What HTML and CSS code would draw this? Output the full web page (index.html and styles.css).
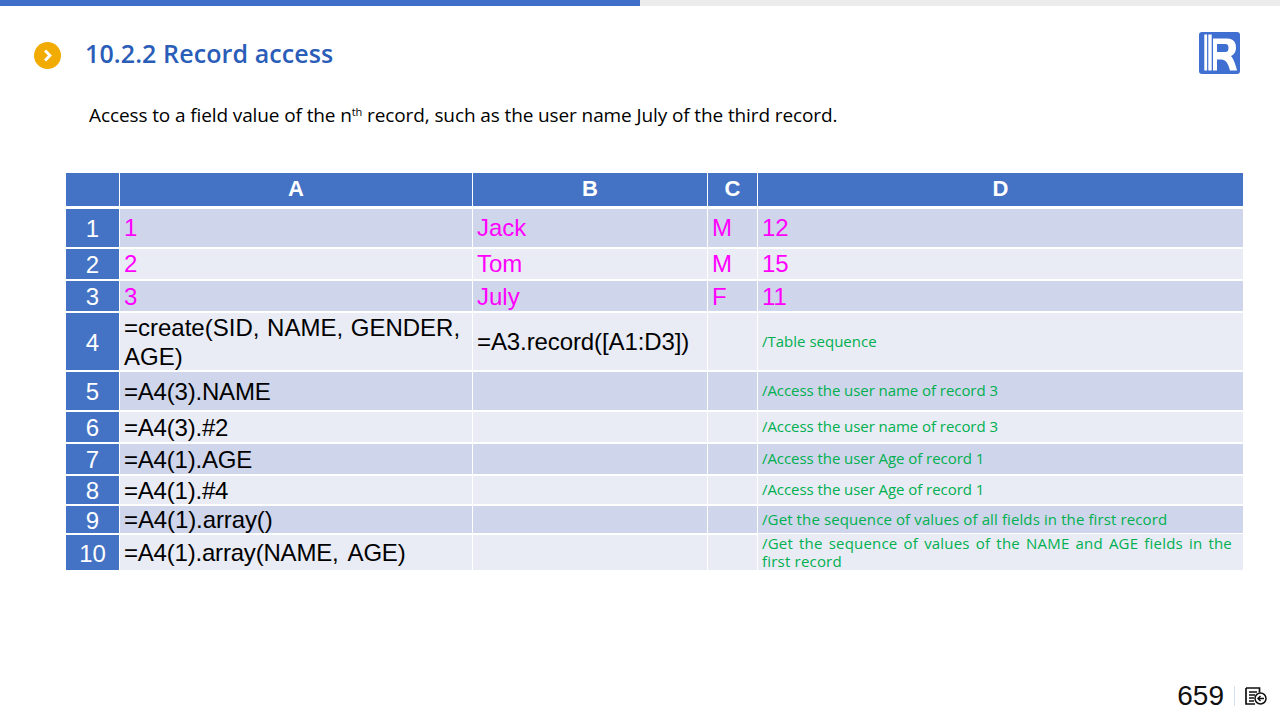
FILE: index.html
```html
<!DOCTYPE html>
<html lang="en">
<head>
<meta charset="utf-8">
<title>10.2.2 Record access</title>
<link rel="stylesheet" href="styles.css">
</head>
<body>
<div class="progress"><div class="progress-fill"></div></div>
<header class="title-row">
  <svg class="bullet" width="27" height="27" viewBox="0 0 28 28"><circle cx="14" cy="14" r="14" fill="#f2ab00"/><path d="M11.500 8.800 16.500 14 11.500 19.200" fill="none" stroke="#fff" stroke-width="3"/></svg>
  <h1 class="title">10.2.2 Record access</h1>
  <svg class="logo" width="41" height="42" viewBox="0 0 41 42"><rect width="41" height="42" rx="3" fill="#3f6fd0"/><path d="M5.300 2.500h2.800v36H5.300zM9.300 2.500h3.400v36H9.300z" fill="#fff"/><path fill-rule="evenodd" d="M14 6.500H28.500C34 6.500 37 10 37 15.500 37 20 35 22.500 32 24 34.500 27 36.500 32 38 38.500H31C29.500 32 27 27.500 22 27.500H18V38.500H14ZM18 12V20H26.500C28.500 20 29.500 18.500 29.500 16S28.500 12 26.500 12Z" fill="#fff"/></svg>
</header>
<p class="intro">Access to a field value of the n<sup class="ord">th</sup> record, such as the user name July of the third record.</p>
<div class="sheet">
  <div class="head"></div><div class="head">A</div><div class="head">B</div><div class="head">C</div><div class="head">D</div>

  <div class="num">1</div><div class="cell dark pink lift">1</div><div class="cell dark pink lift">Jack</div><div class="cell dark pink lift">M</div><div class="cell dark pink lift">12</div>
  <div class="num">2</div><div class="cell pink lift">2</div><div class="cell pink lift">Tom</div><div class="cell pink lift">M</div><div class="cell pink lift">15</div>
  <div class="num">3</div><div class="cell dark pink">3</div><div class="cell dark pink">July</div><div class="cell dark pink">F</div><div class="cell dark pink">11</div>
  <div class="num">4</div><div class="cell spaced">=create(SID, NAME, GENDER, AGE)</div><div class="cell tight">=A3.record([A1:D3])</div><div class="cell"></div><div class="cell note">/Table sequence</div>
  <div class="num">5</div><div class="cell dark formula">=A4(3).NAME</div><div class="cell dark"></div><div class="cell dark"></div><div class="cell dark note narrow">/Access the user name of record 3</div>
  <div class="num">6</div><div class="cell formula">=A4(3).#2</div><div class="cell"></div><div class="cell"></div><div class="cell note narrow">/Access the user name of record 3</div>
  <div class="num">7</div><div class="cell dark formula">=A4(1).AGE</div><div class="cell dark"></div><div class="cell dark"></div><div class="cell dark note narrow">/Access the user Age of record 1</div>
  <div class="num">8</div><div class="cell formula">=A4(1).#4</div><div class="cell"></div><div class="cell"></div><div class="cell note narrow">/Access the user Age of record 1</div>
  <div class="num">9</div><div class="cell dark tight">=A4(1).array()</div><div class="cell dark"></div><div class="cell dark"></div><div class="cell dark note wide">/Get the sequence of values of all fields in the first record</div>
  <div class="num">10</div><div class="cell args">=A4(1).array(NAME, AGE)</div><div class="cell"></div><div class="cell"></div><div class="cell note just">/Get the sequence of values of the NAME and AGE fields in the first record</div>
</div>
<footer class="foot">
  <span class="page">659</span>
  <span class="sep"></span>
  <svg class="back" width="22" height="18" viewBox="0 0 22 18"><path d="M1 1h13.500v4.500M1 1v16h9" fill="none" stroke="#111" stroke-width="1.700"/><path d="M4 5h8M4 8h6M4 11h5M4 14h5" stroke="#111" stroke-width="1.500"/><circle cx="15.500" cy="11.500" r="5.500" fill="#fff" stroke="#111" stroke-width="1.500"/><path d="M19 11.500h-6M15.500 9 13 11.500 15.500 14" fill="none" stroke="#111" stroke-width="1.500"/></svg>
</footer>
</body>
</html>
```
FILE: styles.css
```css
* { box-sizing: border-box; }
html, body { margin: 0; padding: 0; }
body { width: 1280px; height: 720px; background: #fff; overflow: hidden; position: relative; font-family: "Liberation Sans", Arial, sans-serif; }
.progress { height: 6px; background: #ececec; }
.progress-fill { width: 640px; height: 100%; background: #3f6fc8; }
.title-row { display: flex; align-items: center; height: 44px; margin-top: 26px; padding: 0 40px 0 34px; }
.bullet { flex: none; margin-top: 2px; }
.title { flex: 1; margin: -2px 0 0 24px; font: 600 25px/44px "Open Sans", sans-serif; letter-spacing: 0.1px; color: #2a5db8; }
.logo { flex: none; margin-top: -3px; }
.intro { margin: 26px 0 0 89px; font: 400 19px/26px "Open Sans", sans-serif; letter-spacing: -0.11px; color: #000; height: 26px; }
.ord { font-size: 11px; line-height: 0; vertical-align: 6px; }
.sheet { display: grid; width: 1177px; margin: 45px 0 0 66px; grid-template-columns: 53px 352px 234px 49px 485px; grid-template-rows: 34px 38px 30px 30px 57px 38px 30px 30px 28px 27px 35px; column-gap: 1px; row-gap: 2px; }
.head { height: 33px; padding-bottom: 2px; background: #4472c4; color: #fff; font-size: 22px; font-weight: 700; display: flex; align-items: center; justify-content: center; }
.num { padding-top: 2px; background: #4472c4; color: #fff; font-size: 24px; display: flex; align-items: center; justify-content: center; }
.cell { background: #e9ebf5; color: #000; font-size: 24px; line-height: 29px; display: flex; align-items: center; padding: 0 4px; }
.dark { background: #cfd5ea; }
.pink { color: #ff00ff; }
.lift { padding-bottom: 2px; }
.tight { letter-spacing: -0.1px; }
.spaced { word-spacing: 1px; }
.formula { letter-spacing: -0.2px; }
.args { letter-spacing: -0.2px; word-spacing: 4px; }
.note { padding-bottom: 2px; font: 400 15px/18px "Open Sans", sans-serif; color: #00b050; }
.narrow { letter-spacing: -0.06px; }
.wide { letter-spacing: 0.11px; }
.just { display: block; padding: 0 11px 0 4px; margin-top: -1px; text-align: justify; letter-spacing: 0.2px; line-height: 18px; }
.foot { position: absolute; right: 13px; top: 680px; display: flex; align-items: center; height: 32px; }
.page { font-size: 28px; color: #111; }
.sep { width: 1px; height: 20px; background: #d5e0ee; margin: 0 10px; }
.back { display: block; }
```
